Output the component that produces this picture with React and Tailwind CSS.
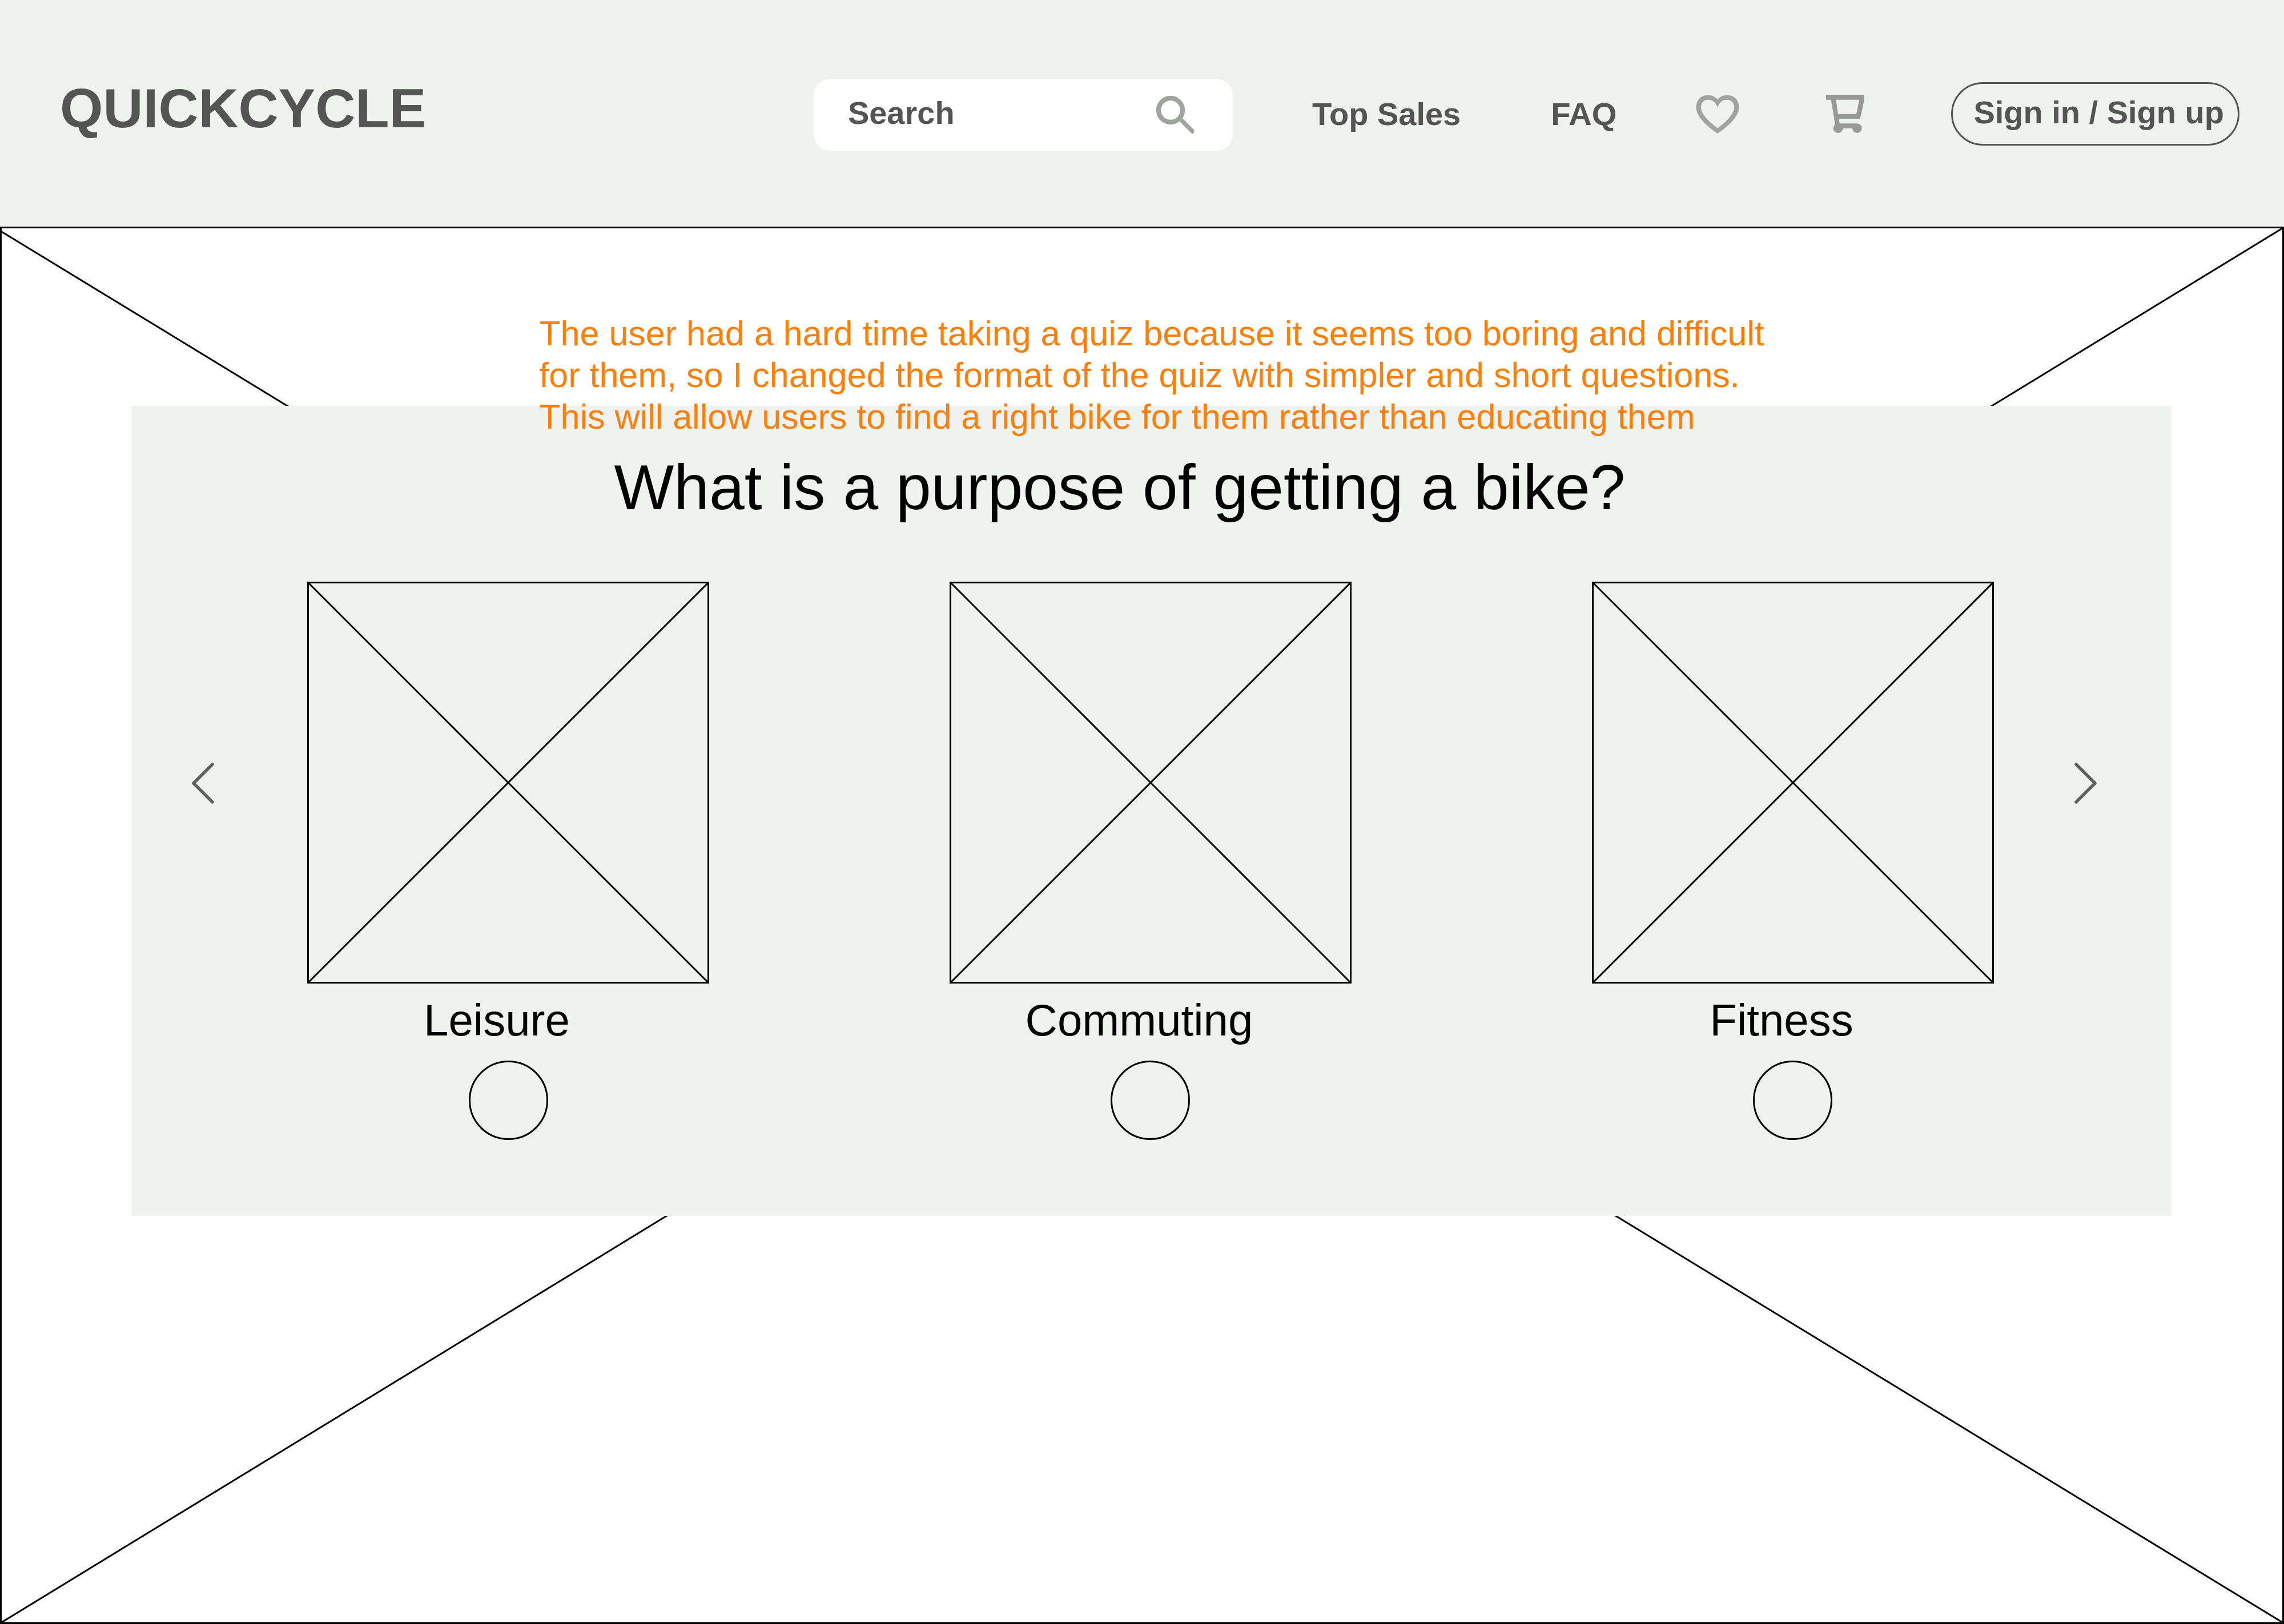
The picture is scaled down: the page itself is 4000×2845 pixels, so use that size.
const options = [
  { id: "leisure", label: "Leisure" },
  { id: "commuting", label: "Commuting" },
  { id: "fitness", label: "Fitness" },
];

function SearchIcon() {
  return (
    <svg className="size-[67px] shrink-0" viewBox="0 0 67 67" aria-hidden="true">
      <circle cx="25" cy="25" r="21" fill="none" stroke="#a1a3a1" strokeWidth="8.4" />
      <path d="M46 39 L65 58.5 Q68 61.5 66 64 L63 67 L41 45 Z" fill="#a1a3a1" />
    </svg>
  );
}

function HeartIcon() {
  return (
    <svg className="h-[68px] w-[76px]" viewBox="0 0 76 68" aria-hidden="true">
      <path
        fill="#a1a3a1"
        fillRule="evenodd"
        d="M38 68 C18 54 0.5 38 0.5 22 C0.5 9 9 0.7 21 0.7 C28 0.7 34 3.5 38 8 C42 3.5 48 0.7 55 0.7 C67 0.7 75.5 9 75.5 22 C75.5 38 58 54 38 68 Z M38 58.5 C20 45 9 33 9 22 C9 13.5 14.5 8.8 22 8.8 C30 8.8 34.5 14 38 22 C41.5 14 46 8.8 54 8.8 C61.5 8.8 67 13.5 67 22 C67 33 56 45 38 58.5 Z"
      />
    </svg>
  );
}

function CartIcon() {
  return (
    <svg className="size-[67px]" viewBox="0 0 67 67" fill="#989896" aria-hidden="true">
      <path
        fillRule="evenodd"
        d="M0 0 H67 V8.7 L59.7 42 H22.3 L23.7 50.3 H54.3 V58.7 H21 L15.8 52 L8.7 8.7 H0 Z M17.3 8.7 L21 33.7 H53 L58.3 8.7 Z"
      />
      <circle cx="21" cy="58.7" r="8.3" />
      <circle cx="54.3" cy="58.7" r="8.3" />
    </svg>
  );
}

function Chevron({ d }) {
  return (
    <svg className="h-[74px] w-10" viewBox="0 0 40 74" fill="none" aria-hidden="true">
      <path d={d} stroke="#606060" strokeWidth="5.5" strokeLinecap="round" strokeLinejoin="round" />
    </svg>
  );
}

function Cross({ startY = 0 }) {
  return (
    <svg className="absolute inset-0 h-full w-full" stroke="#000000" strokeWidth="3" aria-hidden="true">
      <line x1="0" y1={startY} x2="100%" y2="100%" />
      <line x1="100%" y1="0" x2="0" y2="100%" />
    </svg>
  );
}

function Header() {
  return (
    <header className="flex items-center bg-[#f0f2ef] pt-[139px] pr-[78px] pb-[133px] pl-[105px] text-[56px] leading-[64px] font-bold text-[#545454]">
      <a href="#home" className="pb-6 text-[97px] leading-[97px]">
        QUICKCYCLE
      </a>
      <div className="ml-auto flex items-center gap-[139px]">
        <form role="search" className="flex h-[125px] w-[734px] items-center rounded-[28px] bg-white pr-[67px] pl-[60px]">
          <input
            type="text"
            aria-label="Search"
            placeholder="Search"
            className="min-w-0 flex-1 bg-transparent pb-2 outline-none placeholder:text-[#545454] placeholder:opacity-100"
          />
          <button type="submit" aria-label="Submit search">
            <SearchIcon />
          </button>
        </form>
        <nav className="flex gap-[158px] pb-1 whitespace-nowrap">
          <a href="#top-sales">Top Sales</a>
          <a href="#faq">FAQ</a>
        </nav>
        <div className="flex items-center gap-[152px] pb-1">
          <button type="button" aria-label="Favorites">
            <HeartIcon />
          </button>
          <button type="button" aria-label="Cart">
            <CartIcon />
          </button>
          <button
            type="button"
            className="rounded-full border-3 border-[#545454] pt-[18px] pr-6 pb-[23px] pl-9 whitespace-nowrap"
          >
            Sign in / Sign up
          </button>
        </div>
      </div>
    </header>
  );
}

function Option({ id, label }) {
  return (
    <label htmlFor={id} className="flex flex-col items-center">
      <span className="relative block aspect-square w-full border-3 border-black">
        <Cross />
      </span>
      <span className="mt-5 pr-10 text-[78px] leading-[88px]">{label}</span>
      <input
        id={id}
        type="radio"
        name="purpose"
        className="mt-[27px] size-[139px] appearance-none rounded-full border-3 border-black checked:bg-black"
      />
    </label>
  );
}

export default function App() {
  return (
    <div className="flex min-h-screen flex-col bg-white font-['Liberation_Sans',Arial,sans-serif] text-black">
      <Header />
      <main className="relative flex-1 border-3 border-black pt-[148px] pr-[194px] pb-[148px] pl-[228px]">
        <Cross startY={6} />
        <p className="relative z-10 mx-auto -mb-14 w-fit text-[61px] leading-[73px] text-[#ff7f0a]">
          The user had a hard time taking a quiz because it seems too boring and difficult
          <br />
          for them, so I changed the format of the quiz with simpler and short questions.
          <br />
          This will allow users to find a right bike for them rather than educating them
        </p>
        <section className="relative bg-[#f0f2ef] pt-[77px] pb-[133px]">
          <h1 className="pr-28 text-center text-[111px] leading-[133px]">What is a purpose of getting a bike?</h1>
          <div className="mt-[98px] flex items-start pr-[131px] pl-[105px]">
            <button type="button" aria-label="Previous" className="mt-[316px] mr-[162px]">
              <Chevron d="M36 4 L3 37 L36 70" />
            </button>
            <div role="radiogroup" aria-label="Purpose" className="grid flex-1 grid-cols-3 gap-x-[14.25%]">
              {options.map((option) => (
                <Option key={option.id} {...option} />
              ))}
            </div>
            <button type="button" aria-label="Next" className="mt-[316px] ml-[140px]">
              <Chevron d="M4 4 L37 37 L4 70" />
            </button>
          </div>
        </section>
      </main>
    </div>
  );
}
